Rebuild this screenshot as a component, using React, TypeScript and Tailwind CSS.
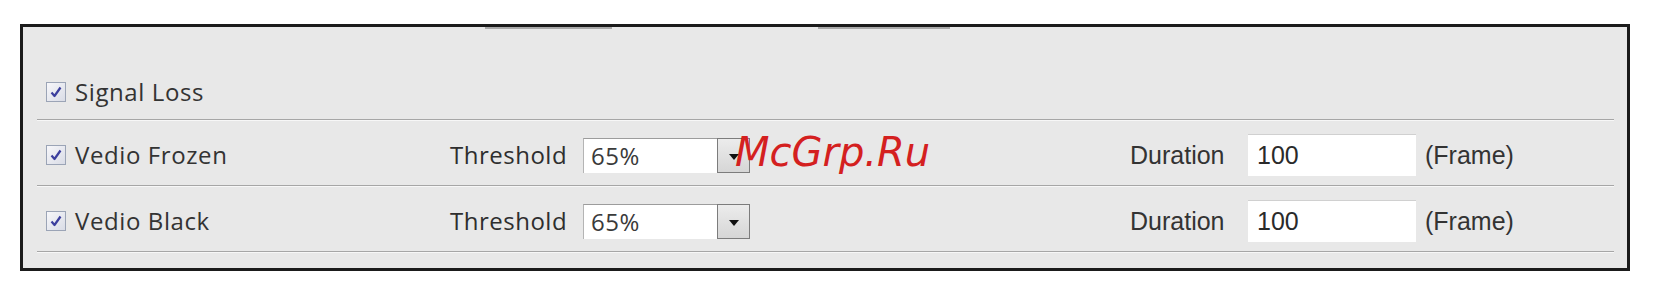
import React from 'react'

const labelFont = { fontFamily: '"Open Sans", "Noto Sans", sans-serif' }
const arialFont = { fontFamily: '"Liberation Sans", Arial, sans-serif' }

function Checkbox() {
  return (
    <span className="flex h-[20px] w-[20px] shrink-0 items-center justify-center border border-[#9ba4b6] bg-gradient-to-br from-[#f7f7fa] to-[#d9dce6]">
      <svg width="14" height="14" viewBox="0 0 14 14">
        <path d="M2.5 7.5 L5.5 11 L11.5 2.5" fill="none" stroke="#3c3f9e" strokeWidth="2.2" strokeLinejoin="round" />
      </svg>
    </span>
  )
}

function Separator() {
  return (
    <div className="h-[2px] border-t border-b border-t-[#a6a6a6] border-b-[#f7f7f7]" />
  )
}

function Label({ text }: { text: string }) {
  return (
    <div className="flex w-[404px] items-center gap-[9px]">
      <Checkbox />
      <span className="text-[24px] leading-none tracking-[0.6px] text-[#333]" style={labelFont}>
        {text}
      </span>
    </div>
  )
}

function DetectRow({ text }: { text: string }) {
  return (
    <div className="flex h-[64px] items-center pl-[9px] pt-[4px]">
      <Label text={text} />
      <span className="w-[133px] text-[24px] leading-none tracking-[0.5px] text-[#2e2e2e]" style={labelFont}>
        Threshold
      </span>
      <div className="flex h-[35px] items-stretch">
        <div
          className="flex w-[134px] items-center border-t border-l border-t-[#9c9c9c] border-l-[#b4b4b4] bg-white pl-[7px] text-[24px] leading-none tracking-[0.5px] text-[#3a3a3a]"
          style={labelFont}
        >
          65%
        </div>
        <div className="flex w-[33px] items-center justify-center border border-[#7c7c7c] bg-gradient-to-b from-[#ececec] to-[#d6d6d6]">
          <svg width="10" height="6" viewBox="0 0 10 6" className="mt-[4px]">
            <path d="M0 0 H10 L5 6 Z" fill="#111" />
          </svg>
        </div>
      </div>
      <div className="w-[380px]" />
      <span className="w-[118px] text-[25px] leading-none text-[#333]" style={arialFont}>
        Duration
      </span>
      <div
        className="flex h-[42px] w-[168px] items-center border-t border-t-[#d0d0d0] bg-white pl-[9px] text-[25px] leading-none text-[#2a2a2a]"
        style={arialFont}
      >
        100
      </div>
      <span className="ml-[9px] text-[25px] leading-none text-[#333]" style={arialFont}>
        (Frame)
      </span>
    </div>
  )
}

export default function App() {
  return (
    <div className="relative h-[298px] w-[1654px] overflow-hidden bg-white">
      <div className="ml-[20px] mt-[24px] w-[1610px] border-[3px] border-[#1b1b1b] bg-[#e8e8e8] pl-[14px] pr-[13px] pb-[15px]">
        {/* Signal Loss */}
        <div className="flex h-[92px] flex-col">
          <div className="flex h-[2px]">
            <div className="ml-[448px] w-[127px] bg-[#a9a9a9]" />
            <div className="ml-[206px] w-[132px] bg-[#a9a9a9]" />
          </div>
          <div className="flex flex-1 items-center pl-[9px] pt-[36px]">
            <Label text="Signal Loss" />
          </div>
        </div>
        <Separator />
        <DetectRow text="Vedio Frozen" />
        <Separator />
        <DetectRow text="Vedio Black" />
        <Separator />
      </div>

      {/* watermark */}
      <div
        className="absolute left-[735px] top-[132px] text-[40px] italic leading-none text-[#d4201f]"
        style={{ fontFamily: '"DejaVu Sans", sans-serif' }}
      >
        McGrp.Ru
      </div>
    </div>
  )
}
